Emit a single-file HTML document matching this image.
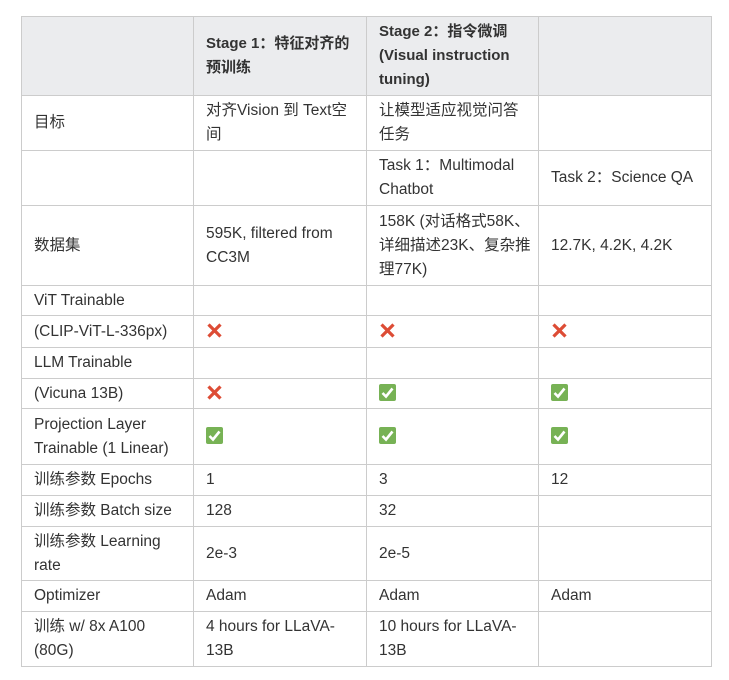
<!DOCTYPE html>
<html><head><meta charset="utf-8"><style>
html,body{margin:0;background:#fff;}
body{width:729px;height:680px;position:relative;font-family:"Liberation Sans","Noto Sans CJK SC",sans-serif;font-size:15.5px;color:#333;}
table{position:absolute;left:21px;top:16px;border-collapse:collapse;table-layout:fixed;width:690px;}
td,th{border:1px solid #ccc;padding:0 12px;line-height:24px;vertical-align:middle;text-align:left;font-weight:normal;overflow:hidden;}
thead th{background:#ebecee;font-weight:bold;font-size:15px;}
col.a{width:172px}col.b{width:173px}col.c{width:172px}col.d{width:173px}
.x{display:inline-block;width:17px;height:17px;vertical-align:-3px;}
.ok{display:inline-block;width:17px;height:17px;background:#77b255;border-radius:2px;vertical-align:-3px;position:relative}
.ok svg{position:absolute;left:0;top:0}
.nw{white-space:nowrap}
</style></head><body>
<table>
<colgroup><col class="a"><col class="b"><col class="c"><col class="d"></colgroup>
<thead><tr style="height:79px"><th></th><th>Stage 1：特征对齐的预训练</th><th>Stage 2：指令微调 (Visual instruction tuning)</th><th></th></tr></thead>
<tbody>
<tr style="height:55px"><td>目标</td><td>对齐Vision 到 Text空<br>间</td><td>让模型适应视觉问答<br>任务</td><td></td></tr>
<tr style="height:55px"><td></td><td></td><td>Task 1：Multimodal Chatbot</td><td>Task 2：Science QA</td></tr>
<tr style="height:80px"><td>数据集</td><td>595K, filtered from CC3M</td><td class="nw">158K (对话格式58K、<br>详细描述23K、复杂推<br>理77K)</td><td>12.7K, 4.2K, 4.2K</td></tr>
<tr style="height:30px"><td>ViT Trainable</td><td></td><td></td><td></td></tr>
<tr style="height:32px"><td>(CLIP-ViT-L-336px)</td><td><svg class="x" viewBox="0 0 17 17"><path d="M2.5 2.5L14.5 14.5M14.5 2.5L2.5 14.5" stroke="#dd4c35" stroke-width="3.2"/></svg></td><td><svg class="x" viewBox="0 0 17 17"><path d="M2.5 2.5L14.5 14.5M14.5 2.5L2.5 14.5" stroke="#dd4c35" stroke-width="3.2"/></svg></td><td><svg class="x" viewBox="0 0 17 17"><path d="M2.5 2.5L14.5 14.5M14.5 2.5L2.5 14.5" stroke="#dd4c35" stroke-width="3.2"/></svg></td></tr>
<tr style="height:31px"><td>LLM Trainable</td><td></td><td></td><td></td></tr>
<tr style="height:30px"><td>(Vicuna 13B)</td><td><svg class="x" viewBox="0 0 17 17"><path d="M2.5 2.5L14.5 14.5M14.5 2.5L2.5 14.5" stroke="#dd4c35" stroke-width="3.2"/></svg></td><td><span class="ok"><svg width="17" height="17" viewBox="0 0 17 17"><path d="M3.5 9L7 12.5L13.5 4.5" stroke="#fff" stroke-width="2.6" fill="none"/></svg></span></td><td><span class="ok"><svg width="17" height="17" viewBox="0 0 17 17"><path d="M3.5 9L7 12.5L13.5 4.5" stroke="#fff" stroke-width="2.6" fill="none"/></svg></span></td></tr>
<tr style="height:56px"><td>Projection Layer Trainable (1 Linear)</td><td><span class="ok"><svg width="17" height="17" viewBox="0 0 17 17"><path d="M3.5 9L7 12.5L13.5 4.5" stroke="#fff" stroke-width="2.6" fill="none"/></svg></span></td><td><span class="ok"><svg width="17" height="17" viewBox="0 0 17 17"><path d="M3.5 9L7 12.5L13.5 4.5" stroke="#fff" stroke-width="2.6" fill="none"/></svg></span></td><td><span class="ok"><svg width="17" height="17" viewBox="0 0 17 17"><path d="M3.5 9L7 12.5L13.5 4.5" stroke="#fff" stroke-width="2.6" fill="none"/></svg></span></td></tr>
<tr style="height:31px"><td>训练参数 Epochs</td><td>1</td><td>3</td><td>12</td></tr>
<tr style="height:31px"><td>训练参数 Batch size</td><td>128</td><td>32</td><td></td></tr>
<tr style="height:54px"><td>训练参数 Learning rate</td><td>2e-3</td><td>2e-5</td><td></td></tr>
<tr style="height:31px"><td>Optimizer</td><td>Adam</td><td>Adam</td><td>Adam</td></tr>
<tr style="height:55px"><td>训练 w/ 8x A100<br>(80G)</td><td>4 hours for LLaVA-<br>13B</td><td>10 hours for LLaVA-<br>13B</td><td></td></tr>
</tbody></table>
</body></html>
